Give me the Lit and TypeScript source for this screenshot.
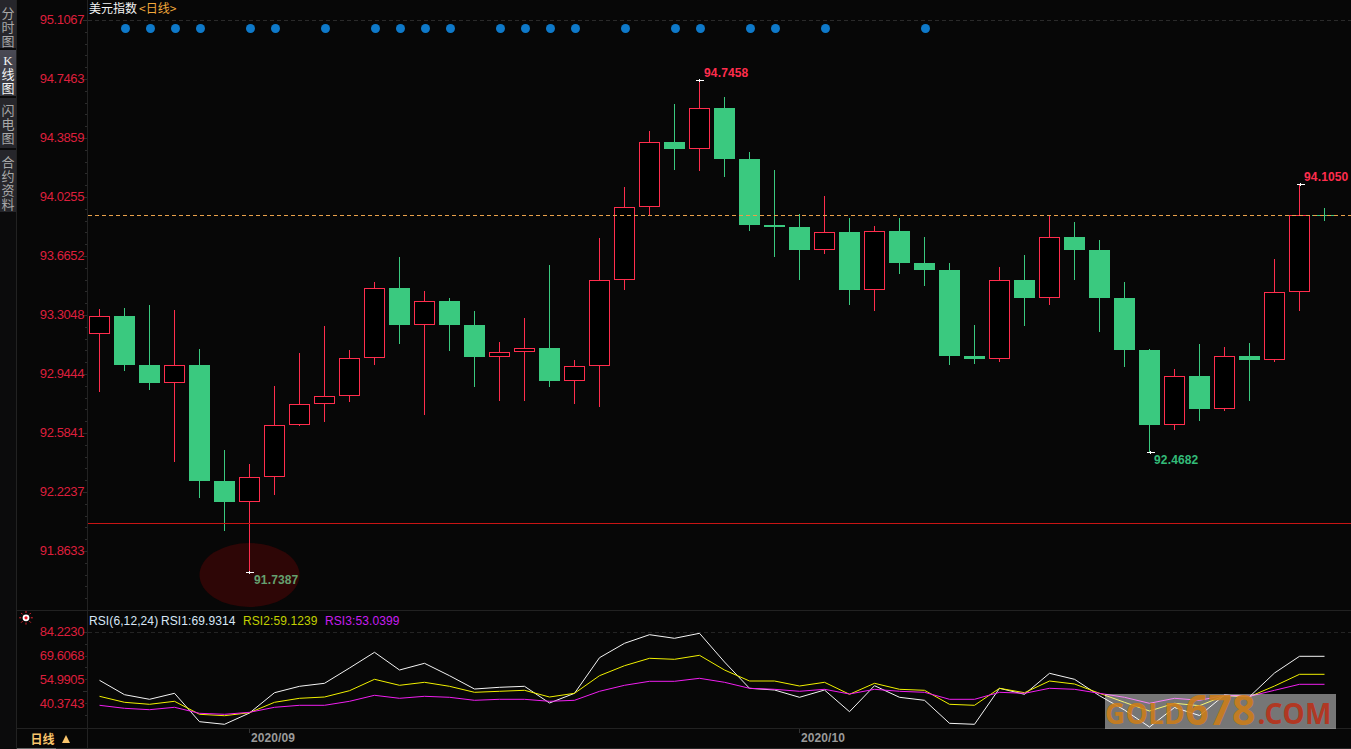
import { LitElement, html, svg, css } from "lit";
import { customElement } from "lit/decorators.js";

// top, bottom of body, wick high, wick low, up(red)?
type C = [number, number, number, number, 0 | 1];
const CANDLES: C[] = [
  [316, 334, 309, 392, 1], [316, 365, 308, 371, 0], [365, 383, 305, 390, 0], [365, 383, 310, 462, 1],
  [365, 481, 349, 498, 0], [481, 502, 450, 531, 0], [477, 502, 464, 573, 1], [425, 477, 386, 495, 1],
  [404, 425, 353, 426, 1], [396, 404, 326, 422, 1], [358, 396, 350, 402, 1], [288, 358, 282, 365, 1],
  [288, 325, 257, 344, 0], [301, 325, 291, 415, 1], [301, 325, 298, 351, 0], [325, 357, 311, 387, 0],
  [352, 357, 342, 401, 1], [348, 352, 318, 401, 1], [348, 381, 265, 387, 0], [366, 381, 360, 404, 1],
  [280, 366, 238, 407, 1], [207, 280, 187, 290, 1], [142, 207, 131, 215, 1], [142, 149, 104, 170, 0],
  [108, 149, 80, 171, 1], [108, 159, 97, 177, 0], [159, 225, 152, 231, 0], [225, 227, 170, 257, 0],
  [227, 250, 214, 280, 0], [232, 250, 196, 254, 1], [232, 290, 218, 305, 0], [231, 290, 226, 311, 1],
  [231, 263, 218, 274, 0], [263, 270, 237, 286, 0], [270, 356, 263, 365, 0], [356, 359, 325, 364, 0],
  [280, 359, 267, 362, 1], [280, 298, 255, 326, 0], [237, 298, 215, 305, 1], [237, 250, 222, 280, 0],
  [250, 298, 240, 332, 0], [298, 350, 282, 367, 0], [350, 425, 349, 453, 0], [376, 425, 369, 430, 1],
  [376, 409, 344, 421, 0], [356, 409, 347, 411, 1], [356, 360, 343, 401, 0], [292, 360, 259, 362, 1],
  [215, 292, 184, 311, 1],
];

const DOTS = [126, 151, 176, 201, 251, 276, 326, 376, 401, 426, 451, 501, 526, 551, 576, 626, 676, 701, 751, 776, 826, 926];

const AXIS_TOP: [string, number][] = [
  ["95.1067", 20], ["94.7463", 79], ["94.3859", 138], ["94.0255", 197], ["93.6652", 256],
  ["93.3048", 315], ["92.9444", 374], ["92.5841", 433], ["92.2237", 492], ["91.8633", 551],
];
const AXIS_RSI: [string, number][] = [["84.2230", 632], ["69.6068", 656], ["54.9905", 680], ["40.3743", 704]];

const RSI1 = [680.3, 694.7, 699.3, 693.3, 721.7, 724.3, 713, 692.7, 686.3, 683.3, 668, 652.3, 670, 663.3, 675.7, 689, 687.3, 686.3, 703, 693.3, 657.7, 643.3, 634.7, 638.3, 633.3, 662, 688.3, 690, 697.3, 690, 711.7, 685.7, 697.3, 700.3, 723.3, 724.3, 688.3, 694.3, 673.3, 679.3, 695.7, 710, 727, 707.5, 715.5, 695, 696.7, 673, 656.3, 656.3];
const RSI2 = [696.3, 702.3, 704.3, 701.3, 714.3, 715.7, 712.7, 702.3, 698.3, 697, 690.7, 679.3, 685.3, 682.3, 686.3, 692.3, 691.3, 690.3, 697, 693.3, 675.7, 665.7, 658.3, 659.3, 655.3, 670, 681, 681, 686, 682.3, 694.3, 683.3, 689.3, 690.3, 704.3, 705.3, 688.3, 692.7, 681, 684, 693.3, 702.3, 711, 703.3, 705.7, 695.7, 696.7, 686, 674.3, 674.3];
const RSI3 = [705.3, 708.3, 709.7, 707.3, 713.3, 714.3, 712.3, 707.3, 705.3, 705.3, 701.3, 695.3, 698.3, 696.3, 697.3, 700.3, 699.3, 699.3, 701.3, 700.3, 691.3, 685.3, 681.3, 681.3, 678.3, 682.3, 688.3, 689.3, 691.3, 689.3, 694, 689.3, 691.3, 692.3, 699.3, 699.3, 692.3, 693.3, 688.3, 689.3, 693.3, 697.3, 703.3, 698.3, 700.3, 695.3, 696.3, 690.3, 684.3, 684.3];

const pts = (a: number[]) => a.map((y, k) => `${99.5 + 25 * k},${y}`).join(" ");

const TABS = [
  { t: "分时图", cls: "t1" },
  { t: "K线图", cls: "t2 on" },
  { t: "闪电图", cls: "t3" },
  { t: "合约资料", cls: "t4" },
];

function ticks(from: number, to: number) {
  const out = [];
  for (let i = 0; from + i * 11.8 <= to; i++) {
    const y = Math.round(from + i * 11.8);
    out.push(svg`<rect class="tick" x=${i % 5 === 0 ? 83 : 85} y=${y} width=${i % 5 === 0 ? 4 : 2} height="1"></rect>`);
  }
  return out;
}

@customElement("app-root")
export class AppRoot extends LitElement {
  static styles = css`
    :host { display: block; position: relative; width: 1351px; height: 749px; background: #070707; overflow: hidden; }
    .app { display: flex; width: 1351px; height: 749px; font-family: "Liberation Sans", Arial, sans-serif; }
    .side { width: 17px; box-sizing: border-box; flex: none; display: flex; flex-direction: column; gap: 2px; border-right: 1px solid #222; background: #0b0b0c; }
    .tab { display: flex; align-items: flex-end; justify-content: center; background: #26262b; color: #a8a8a8; box-sizing: border-box; }
    .tab span { display: block; width: 14px; text-align: center; word-break: break-all; font: 13px/14px "Noto Sans CJK SC", sans-serif; }
    .t1 { height: 48px; }
    .t2 { height: 46px; }
    .t3 { height: 50px; padding-bottom: 3px; }
    .t4 { height: 62px; padding-bottom: 1px; }
    .tab.on { background: linear-gradient(#4a4a55, #34343a); color: #f4f4f4; }
    .tab.on span { font-family: "Liberation Serif", "Noto Sans CJK SC", serif; }
    .main { flex: 1; display: flex; flex-direction: column; min-width: 0; }
    svg { display: block; flex: none; }
    .foot { height: 21px; box-sizing: border-box; display: flex; border-top: 1px solid #222; border-bottom: 1px solid #262626; position: relative; }
    .scroll { position: absolute; left: 0; bottom: -1px; width: 39px; height: 1px; background: #666; }
    .period { width: 71px; flex: none; display: flex; align-items: center; justify-content: center; gap: 7px; border-right: 1px solid #222;
      color: #fac56c; font: bold 12px/18px "Noto Sans CJK SC", sans-serif; padding-right: 4px; box-sizing: border-box; }
    .tri { width: 0; height: 0; border-left: 4px solid transparent; border-right: 4px solid transparent; border-bottom: 8px solid #fac56c; }
    .date { font: bold 12px "Liberation Sans", Arial, sans-serif; letter-spacing: 0.1px; fill: #9a9a9a; }
    .tick { fill: #2c2c2c; }
    .axis { font: 13px "Liberation Sans", Arial, sans-serif; letter-spacing: -0.4px; fill: #dd1f3c; text-anchor: end; }
    .ttl { font: 12px "Noto Sans CJK SC", sans-serif; }
    .hl { font: bold 12px "Liberation Sans", Arial, sans-serif; letter-spacing: 0.15px; }
    .rsi { font: 12px "Liberation Sans", Arial, sans-serif; letter-spacing: 0.1px; }
    .wm { position: absolute; left: 1105px; top: 694px; width: 231px; height: 35px; background: rgba(255, 255, 255, 0.45);
      display: flex; align-items: flex-start; font-family: "Noto Sans", sans-serif; font-weight: 700; white-space: nowrap; }
    .wm span { display: block; }
    .w1 { font-size: 28px; color: rgba(205, 125, 24, 0.9); line-height: 35px; margin-top: 1.6px; letter-spacing: 0.4px; }
    .w2 { font-size: 41px; color: rgba(205, 125, 24, 0.9); line-height: 35px; margin-top: -2.4px; margin-right: 2px; }
    .w3 { font-size: 28px; color: rgba(186, 48, 24, 0.9); line-height: 35px; margin-top: 1.6px; letter-spacing: 0.5px; }
  `;

  private candle(c: C, k: number) {
    const x = 89 + 25 * k;
    const [t, b, h, l, up] = c;
    if (up) {
      return svg`<rect x=${x + 10} y=${h} width="1" height=${l - h} fill="#ff2d4d"></rect>
        <rect x=${x + 0.5} y=${t + 0.5} width="20" height=${b - t - 1} fill="#000" stroke="#ff2d4d" stroke-width="1"></rect>`;
    }
    return svg`<rect x=${x + 10} y=${h} width="1" height=${l - h} fill="#3ac97f"></rect>
      <rect x=${x} y=${t} width="21" height=${b - t} fill="#3ac97f"></rect>`;
  }

  private cross(x: number, y: number) {
    return svg`<rect x=${x - 3} y=${y} width="8" height="1" fill="#fff"></rect><rect x=${x} y=${y - 1} width="1" height="3" fill="#fff"></rect>`;
  }

  render() {
    const sun = [0, 45, 90, 135, 180, 225, 270, 315].map((a) => {
      const r = (a * Math.PI) / 180;
      return svg`<line x1=${26 + 4.8 * Math.cos(r)} y1=${617.8 + 4.8 * Math.sin(r)} x2=${26 + 6.8 * Math.cos(r)} y2=${617.8 + 6.8 * Math.sin(r)} stroke="#e8232f" stroke-width="1"></line>`;
    });
    return html`
      <div class="app">
        <div class="side">
          ${TABS.map((t) => html`<div class="tab ${t.cls}"><span>${t.t}</span></div>`)}
        </div>
        <div class="main">
          <svg width="1334" height="611" viewBox="17 0 1334 611" shape-rendering="crispEdges">
            <rect x="87" y="0" width="1" height="610" fill="#222"></rect>
            <rect x="17" y="610" width="1334" height="1" fill="#222"></rect>
            ${ticks(20, 600)}
            <line x1="88" x2="1351" y1="20.5" y2="20.5" stroke="#2a2a2a" stroke-dasharray="4 3"></line>
            ${AXIS_TOP.map(([t, y]) => svg`<text class="axis" x="84" y=${y + 4}>${t}</text>`)}
            <text class="ttl" x="89" y="13" fill="#f4f4f4">美元指数<tspan fill="#f2a93c" dx="2">&lt;日线&gt;</tspan></text>
            ${DOTS.map((x) => svg`<circle cx=${x - 0.5} cy="28.5" r="4.5" fill="#0e79c9" shape-rendering="auto"></circle>`)}
            <ellipse cx="249.5" cy="575" rx="50" ry="32" fill="#2e0606" shape-rendering="auto"></ellipse>
            ${CANDLES.map((c, k) => this.candle(c, k))}
            <rect x="1324" y="208" width="1" height="13" fill="#3ac97f"></rect>
            <rect x="1312" y="215" width="23" height="1" fill="#3ac97f"></rect>
            <line x1="88" x2="1351" y1="215.5" y2="215.5" stroke="#e8a04a" stroke-dasharray="4 3"></line>
            <rect x="88" y="523" width="1263" height="1" fill="#c81414"></rect>
            ${this.cross(699, 80)}${this.cross(249, 572)}${this.cross(1300, 184)}${this.cross(1150, 452)}
            <text class="hl" x="704" y="77" fill="#ff2d4d">94.7458</text>
            <text class="hl" x="254" y="584" fill="#65a06f">91.7387</text>
            <text class="hl" x="1304" y="181" fill="#ff2d4d">94.1050</text>
            <text class="hl" x="1154" y="464" fill="#33bb78">92.4682</text>
          </svg>
          <svg width="1334" height="117" viewBox="17 611 1334 117">
            <rect x="87" y="611" width="1" height="117" fill="#222" shape-rendering="crispEdges"></rect>
            <g shape-rendering="crispEdges">${ticks(632, 724)}</g>
            <line x1="88" x2="1351" y1="632.5" y2="632.5" stroke="#242424" stroke-dasharray="4 3" shape-rendering="crispEdges"></line>
            <circle cx="26" cy="617.8" r="3.4" fill="#fff"></circle>
            <circle cx="26" cy="617.8" r="1.6" fill="#e8131f"></circle>
            ${sun}
            <text class="rsi" x="89" y="624.5" fill="#d8e8f8">RSI(6,12,24)</text>
            <text class="rsi" x="161" y="624.5" fill="#d8e8f8">RSI1:69.9314</text>
            <text class="rsi" x="243" y="624.5" fill="#c2d000">RSI2:59.1239</text>
            <text class="rsi" x="325" y="624.5" fill="#c81ef0">RSI3:53.0399</text>
            ${AXIS_RSI.map(([t, y]) => svg`<text class="axis" x="84" y=${y + 4}>${t}</text>`)}
            <polyline points=${pts(RSI1)} fill="none" stroke="#f4f4f4" stroke-width="1"></polyline>
            <polyline points=${pts(RSI2)} fill="none" stroke="#f0f000" stroke-width="1"></polyline>
            <polyline points=${pts(RSI3)} fill="none" stroke="#f01ef0" stroke-width="1"></polyline>
          </svg>
          <div class="foot">
            <div class="period"><span>日线</span><i class="tri"></i></div>
            <div class="scroll"></div>
            <svg width="1263" height="19" viewBox="88 729 1263 19">
              <rect x="249" y="729" width="1" height="4" fill="#333"></rect>
              <rect x="799" y="729" width="1" height="4" fill="#333"></rect>
              <text class="date" x="251" y="742">2020/09</text>
              <text class="date" x="801" y="742">2020/10</text>
            </svg>
          </div>
        </div>
      </div>
      <div class="wm"><span class="w1">GOLD</span><span class="w2">678</span><span class="w3">.COM</span></div>
    `;
  }
}
